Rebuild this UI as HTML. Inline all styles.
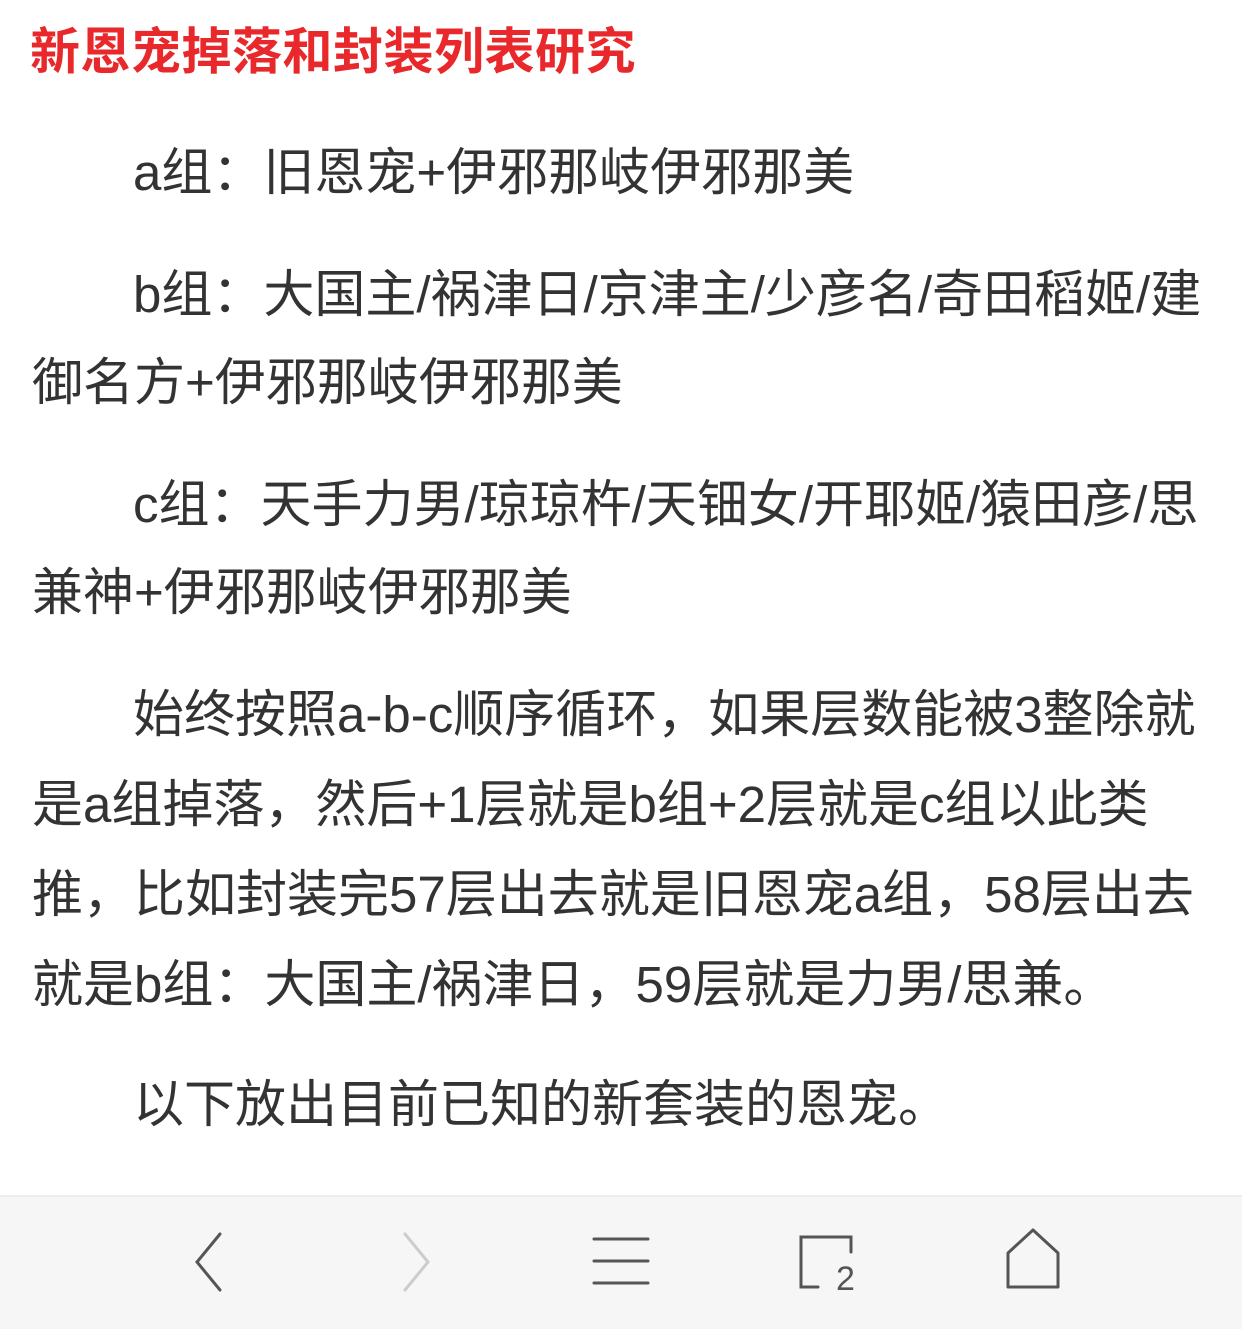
<!DOCTYPE html>
<html><head><meta charset="utf-8"><style>
body{margin:0;width:1242px;height:1327px;background:#fff;position:relative;overflow:hidden;font-family:"Liberation Sans","Noto Sans CJK SC",sans-serif;}
.t{position:absolute;left:30px;top:22px;font-size:50px;font-weight:bold;color:#e8282b;line-height:60px;white-space:nowrap;letter-spacing:0.5px;}
.l{position:absolute;left:32px;font-size:51px;color:#333;line-height:90px;height:90px;white-space:nowrap;}
.i{left:133px;}
.bar{position:absolute;left:0;top:1195px;width:1242px;height:132px;background:#f6f6f6;border-top:2px solid #ececec;}
</style></head><body>
<div class="t">新恩宠掉落和封装列表研究</div>
<div class="l i" style="top:128px">a组：旧恩宠+伊邪那岐伊邪那美</div>
<div class="l i" style="top:250px">b组：大国主/祸津日/京津主/少彦名/奇田稻姬/建</div>
<div class="l" style="top:338px">御名方+伊邪那岐伊邪那美</div>
<div class="l i" style="top:460px">c组：天手力男/琼琼杵/天钿女/开耶姬/猿田彦/思</div>
<div class="l" style="top:548px">兼神+伊邪那岐伊邪那美</div>
<div class="l i" style="top:670px">始终按照a-b-c顺序循环，如果层数能被3整除就</div>
<div class="l" style="top:760px">是a组掉落，然后+1层就是b组+2层就是c组以此类</div>
<div class="l" style="top:850px">推，比如封装完57层出去就是旧恩宠a组，58层出去</div>
<div class="l" style="top:940px">就是b组：大国主/祸津日，59层就是力男/思兼。</div>
<div class="l i" style="top:1060px">以下放出目前已知的新套装的恩宠。</div>
<div class="bar">
<svg width="1242" height="132" style="position:absolute;left:0;top:0" fill="none" stroke-linecap="round">
<path d="M220 37 L197 65 L220 93" stroke="#555" stroke-width="3"/>
<path d="M405 37 L428 65 L405 93" stroke="#ccc" stroke-width="3"/>
<path d="M594 42 H648 M594 64 H648 M594 86 H648" stroke="#555" stroke-width="3"/>
<path d="M851 55 V40 H801 V90 H818" stroke="#555" stroke-width="3"/>
<text x="836" y="93" font-family="Liberation Sans" font-size="34" fill="#555">2</text>
<path d="M1008 56 L1033 33 L1058 56 V90 H1008 Z" stroke="#555" stroke-width="3" stroke-linejoin="round"/>
</svg>
</div>
</body></html>
